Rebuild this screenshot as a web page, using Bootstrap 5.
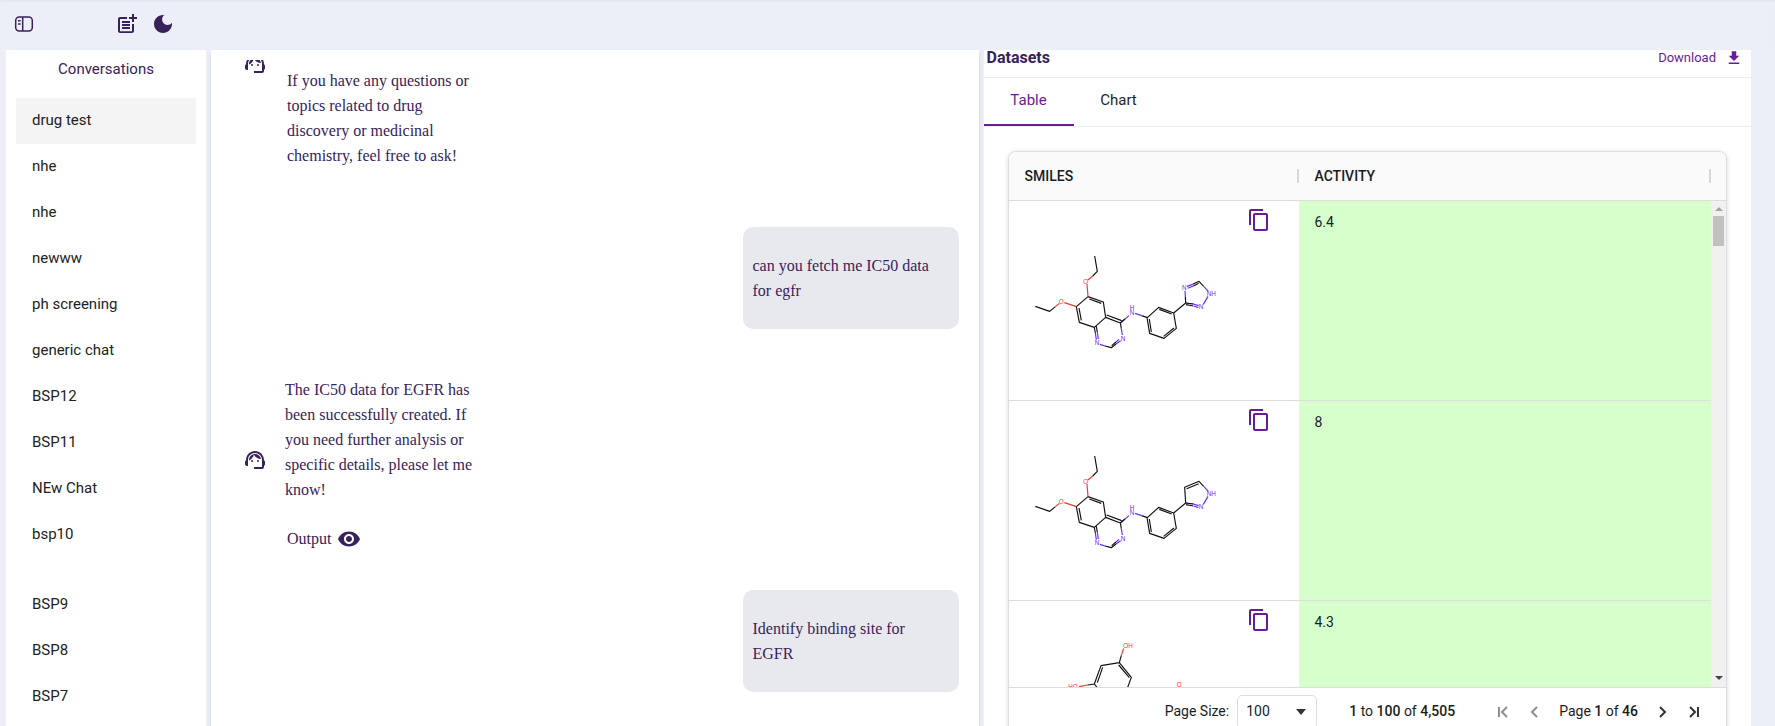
<!DOCTYPE html>
<html lang="en">
<head>
<meta charset="utf-8">
<meta name="viewport" content="width=device-width, initial-scale=1">
<title>Conversations</title>
<link href="https://cdn.jsdelivr.net/npm/bootstrap@5.3.0/dist/css/bootstrap.min.css" rel="stylesheet">
<style>
  :root { --ink: #38225b; --accent: #6a1b9a; --shell: #eceff8; --line: #dddddd; }
  body { background: var(--shell); font-family: Roboto, sans-serif; font-size: 15px; color: #212b36; }
  svg { display: block; }
  .icon { width: 24px; height: 24px; fill: currentColor; flex: none; }
  .bare { border: 0; background: none; padding: 0; color: var(--ink); }
  .topbar { height: 50px; padding: 0 12px 3px; box-shadow: inset 0 3px 3px -2px #dfe2ec; flex: none; }
  .tools { padding-left: 79px; }
  .workspace { padding: 0 24px 0 6px; gap: 5px; min-height: 0; }
  .sidebar { width: 200px; padding: 7px 10px; flex: none; }
  .sidebar h2 { font-size: 15px; font-weight: 400; line-height: 24px; color: var(--ink); margin: 0 0 17px; }
  .talks a { display: block; padding: 0 16px 2px; line-height: 44px; color: #222; text-decoration: none; }
  .talks a.current { background: #f4f4f4; }
  .talks .older { margin-top: 24px; }
  .pane { flex: 1 1 0; min-width: 0; overflow: hidden; }
  .chat { padding-top: 10px; box-shadow: 0 3px 4px #c9cbe2; }
  .feed { height: 100%; padding: 0 20px 0 32px; overflow: hidden; gap: 32px; font-family: "Liberation Serif", serif; font-size: 16px; line-height: 25px; color: var(--ink); }
  .agent { gap: 18px; flex: none; padding: 16px 0 7px; }
  .agent > .icon { margin-bottom: 8px; }
  .agent.first { min-height: 135px; gap: 20px; padding: 8px 0 0; }
  .agent.first > .icon { margin-top: -16px; }
  .agent .words { width: 190px; }
  .mine { align-self: flex-end; width: 216px; padding: 26px 10px; border-radius: 10px; background: #e8e9ef; flex: none; }
  .output { margin-top: 24px; padding-left: 2px; gap: 6px; }
  .datahead { height: 28px; padding: 0 8px 12px 3px; border-bottom: 1px solid #ededed; color: var(--ink); }
  .datahead h1 { font-size: 16px; line-height: 15px; font-weight: 700; margin: 0; }
  .datahead button { color: var(--accent); gap: 9px; font-size: 13px; line-height: 15px; height: 15px; }
  .datahead .icon { width: 18px; height: 18px; }
  .views { height: 49px; border-bottom: 1px solid #ededed; }
  .views button { width: 90px; height: 48px; color: #212529; padding-bottom: 2px; border-bottom: 2px solid transparent; }
  .views button.active { color: var(--accent); border-bottom-color: var(--accent); }
  .datawrap { padding: 24px; }
  .datagrid { height: calc(100vh - 141px); border: 1px solid var(--line); border-radius: 8px; box-shadow: 0 1px 4px 1px rgba(0,0,0,.1); overflow: hidden; font-size: 14px; color: #181d1f; }
  .viewport { flex: 1; min-height: 0; overflow: hidden; border-bottom: 1px solid var(--line); position: relative; }
  .viewport table { width: 100%; table-layout: fixed; border-collapse: separate; border-spacing: 0; }
  .viewport col.structure { width: 290px; }
  .viewport th { height: 49px; padding: 0 0 0 16px; font-weight: 500; background: #fafafa; border-bottom: 1px solid var(--line); }
  .viewport th div { display: flex; align-items: center; justify-content: space-between; height: 14px; line-height: 14px; border-right: 2px solid #d6d7d7; }
  .viewport th:last-child { padding-right: 15px; }
  .viewport td { height: 200px; padding: 0; vertical-align: top; border-bottom: 1px solid var(--line); }
  .viewport td.level { background: #d6ffcc; padding: 11px 16px; line-height: 21px; }
  .smiles { position: relative; height: 199px; }
  .smiles svg.mol { width: 240px; height: 198px; }
  .smiles button { position: absolute; right: 28px; top: 7px; color: var(--accent); }
  .mol { fill: none; stroke: #111; stroke-width: 3.5; stroke-linejoin: round; }
  .mol text { font: 19px "Liberation Sans", sans-serif; stroke: none; text-anchor: middle; }
  .mol .o { stroke: #ff3030; } .mol .n { stroke: #6a2cff; }
  .mol text.o { fill: #ff3030; stroke: none; } .mol text.n { fill: #6a2cff; stroke: none; }
  .track { position: absolute; right: 0; top: 49px; bottom: 0; width: 15px; background: #f1f1f1; padding: 5px 2px; }
  .thumb { height: 30px; background: #c1c1c1; }
  .pager { height: 47px; flex: none; padding-right: 24px; }
  .pager b { font-weight: 500; }
  .pager select { width: 80px; height: 34px; margin: 0 32px 0 8px; padding: 0 8px; border: 1px solid var(--line); border-radius: 5px; appearance: none; color: #181d1f; font-size: 14px; background: #fff; }
  .sizebox { position: relative; }
  .sizebox svg { position: absolute; right: 43px; top: 14px; pointer-events: none; }
  .pager .step { width: 16px; height: 16px; fill: none; stroke: #333; stroke-width: 2; }
  .pager :disabled .step { stroke: #8c8e8f; }
</style>
</head>
<body>
<div class="d-flex flex-column vh-100 overflow-hidden">
  <header class="topbar d-flex align-items-center">
    <button class="bare" aria-label="Toggle sidebar"><svg class="icon" viewBox="0 0 24 24"><g fill="none" stroke="currentColor" stroke-width="1.5"><rect x="3.700" y="5" width="16.600" height="14" rx="3.500"/><path d="M10.700 5v14M6 8.800h2.600M6 12h2.600"/></g></svg></button>
    <div class="tools d-flex gap-2">
      <button class="bare me-1" aria-label="New conversation"><svg class="icon" viewBox="0 0 24 24"><path d="M17 19.22H5V7h7V5H5c-1.1 0-2 .9-2 2v12c0 1.1.9 2 2 2h12c1.1 0 2-.9 2-2v-7h-2v7.22z"/><path d="M19 2h-2v3h-3v2h3v3h2V7h3V5h-3V2zM7 9h8v2H7zm0 3v2h8v-2H7zm0 3h8v2H7z"/></svg></button>
      <button class="bare" aria-label="Dark mode"><svg class="icon" viewBox="0 0 24 24"><path d="M12 3c-4.97 0-9 4.03-9 9s4.03 9 9 9 9-4.03 9-9c0-.46-.04-.92-.1-1.36-.98 1.37-2.58 2.26-4.4 2.26-2.98 0-5.4-2.42-5.4-5.4 0-1.81.89-3.42 2.26-4.4-.44-.06-.9-.1-1.36-.1z"/></svg></button>
    </div>
  </header>

  <main class="workspace d-flex flex-fill">
    <nav class="sidebar bg-white overflow-hidden">
      <h2 class="text-center">Conversations</h2>
      <ul class="talks list-unstyled mb-0">
        <li><a class="current" href="#">drug test</a></li>
        <li><a href="#">nhe</a></li>
        <li><a href="#">nhe</a></li>
        <li><a href="#">newww</a></li>
        <li><a href="#">ph screening</a></li>
        <li><a href="#">generic chat</a></li>
        <li><a href="#">BSP12</a></li>
        <li><a href="#">BSP11</a></li>
        <li><a href="#">NEw Chat</a></li>
        <li><a href="#">bsp10</a></li>
        <li class="older"><a href="#">BSP9</a></li>
        <li><a href="#">BSP8</a></li>
        <li><a href="#">BSP7</a></li>
      </ul>
    </nav>

    <section class="chat pane bg-white">
      <div class="feed d-flex flex-column">
        <div class="agent first d-flex align-items-start">
          <svg class="icon" viewBox="0 0 24 24"><use href="#agent"/></svg>
          <div class="words">If you have any questions or topics related to drug discovery or medicinal chemistry, feel free to ask!</div>
        </div>
        <div class="mine">can you fetch me IC50 data for egfr</div>
        <div class="agent d-flex align-items-center">
          <svg class="icon" viewBox="0 0 24 24"><g id="agent"><path d="M21 12.22C21 6.73 16.74 3 12 3c-4.69 0-9 3.65-9 9.28-.6.34-1 .98-1 1.72v2c0 1.1.9 2 2 2h1v-6.1c0-3.87 3.13-7 7-7s7 3.13 7 7V19h-8v2h8c1.1 0 2-.9 2-2v-1.22c.59-.31 1-.92 1-1.64v-2.3c0-.7-.41-1.31-1-1.62z"/><circle cx="9" cy="13" r="1"/><circle cx="15" cy="13" r="1"/><path d="M18 11.03C17.52 8.18 15.04 6 12.05 6c-3.03 0-6.29 2.51-6.03 6.45 2.47-1.01 4.33-3.21 4.86-5.89 1.31 2.63 4 4.44 7.12 4.47z"/></g></svg>
          <div class="words">
            The IC50 data for EGFR has been successfully created. If you need further analysis or specific details, please let me know!
            <div class="output d-flex align-items-center">Output
              <button class="bare" aria-label="Show output"><svg class="icon" viewBox="0 0 24 24"><path d="M12 4.500C7 4.500 2.730 7.610 1 12c1.730 4.390 6 7.500 11 7.500s9.270-3.110 11-7.500c-1.730-4.390-6-7.500-11-7.500zM12 17c-2.760 0-5-2.240-5-5s2.240-5 5-5 5 2.240 5 5-2.240 5-5 5zm0-8c-1.660 0-3 1.340-3 3s1.340 3 3 3 3-1.340 3-3-1.340-3-3-3z"/></svg></button>
            </div>
          </div>
        </div>
        <div class="mine">Identify binding site for EGFR</div>
      </div>
    </section>

    <section class="pane bg-white">
      <div class="datahead d-flex justify-content-between align-items-center">
        <h1>Datasets</h1>
        <button class="bare d-flex align-items-center">Download <svg class="icon" viewBox="0 0 24 24"><path d="M19 9h-4V3H9v6H5l7 7 7-7zM5 18v2h14v-2H5z"/></svg></button>
      </div>
      <div class="views d-flex" role="tablist">
        <button class="bare active" role="tab" aria-selected="true">Table</button>
        <button class="bare" role="tab" aria-selected="false">Chart</button>
      </div>
      <div class="datawrap">
        <div class="datagrid d-flex flex-column bg-white">
          <div class="viewport">
            <table>
              <colgroup><col class="structure"><col></colgroup>
              <thead><tr><th><div>SMILES</div></th><th><div>ACTIVITY</div></th></tr></thead>
              <tbody>
                <tr>
                  <td><div class="smiles">
                    <svg class="mol" viewBox="27 3 720 594">
                      <g id="core">
                        <path d="M284 168l8 46-14 14M106 319l43 15 17-14M229 320l35-30 46 16 7 46-34 30-45-15zM237 324l7 37M268 297l36 13M317 352l44 17 3 17M320 345l45 17M283 382l3 17M289 379l3 18M315 438l19 5 14-11M335 437l13-11M425 347l17 6 34-31 45 17 8 46-37 30-43-15-8-47M448 357l6 39M478 328l37 14M522 384l-31 25M521 339l36-30"/>
                        <path class="o" d="M278 228l-14 12M261 252l3 38M229 320l-36-12M166 320l12-10"/>
                        <path class="n" d="M364 386l3 19M286 399l3 20M292 397l3 20M300 433l15 5M348 432l14-10M348 426l9-8M361 369l26-22M405 340l20 7M580 312l16 5M581 318l14 5M610 313l14-24M557 309l23 3"/>
                        <path d="M557 309l23 3M558 314l22 4M361 369l14-12"/>
                        <text class="o" x="257" y="251">O</text><text class="o" x="184" y="312">O</text>
                        <text class="n" x="291" y="436">N</text><text class="n" x="369" y="422">N</text>
                        <text class="n" x="396" y="329">H</text><text class="n" x="396" y="345">N</text>
                        <text class="n" x="603" y="327">N</text><text class="n" x="634" y="287">NH</text>
                      </g>
                      <path d="M557 309l-1-20M578 253l19-9 14 15M580 258l16-8"/>
                      <path class="n" d="M556 289l-1-17M561 259l17-6M563 265l17-7M611 259l14 15"/>
                      <text class="n" x="553" y="269">N</text>
                    </svg>
                    <button class="bare" aria-label="Copy SMILES"><svg class="icon" viewBox="0 0 24 24"><path id="copy" d="M16 1H4c-1.100 0-2 .900-2 2v14h2V3h12V1zm3 4H8c-1.100 0-2 .900-2 2v14c0 1.100.900 2 2 2h11c1.100 0 2-.900 2-2V7c0-1.100-.900-2-2-2zm0 16H8V7h11v14z"/></svg></button>
                  </div></td>
                  <td class="level">6.4</td>
                </tr>
                <tr>
                  <td><div class="smiles">
                    <svg class="mol" viewBox="27 3 720 594"><use href="#core"/>
                      <path d="M557 309l-3-47 43-18 14 15M560 266l36-15"/><path class="n" d="M611 259l14 15"/>
                    </svg>
                    <button class="bare" aria-label="Copy SMILES"><svg class="icon" viewBox="0 0 24 24"><use href="#copy"/></svg></button>
                  </div></td>
                  <td class="level">8</td>
                </tr>
                <tr>
                  <td><div class="smiles">
                    <svg class="mol" viewBox="27 33 720 594">
                      <path d="M358 218l6-22M358 218l-55 9-20 55 36 44 55-9 20-55zM356 225l32 38M308 232l-16 46M283 282l-20 3"/>
                      <path class="o" d="M364 196l7-21M263 285l-26 5"/>
                      <text class="o" x="384" y="173">OH</text><text class="o" x="219" y="297">HO</text><text class="o" x="538" y="290">O</text>
                    </svg>
                    <button class="bare" aria-label="Copy SMILES"><svg class="icon" viewBox="0 0 24 24"><use href="#copy"/></svg></button>
                  </div></td>
                  <td class="level">4.3</td>
                </tr>
              </tbody>
            </table>
            <div class="track d-flex flex-column">
              <svg class="mx-auto mb-1" width="8" height="6" viewBox="0 0 8 6"><path d="M0 5l4-4 4 4z" fill="#a3a3a3"/></svg>
              <div class="thumb"></div>
              <svg class="mx-auto mt-auto" width="8" height="6" viewBox="0 0 8 6"><path d="M0 0l4 4 4-4z" fill="#444"/></svg>
            </div>
          </div>
          <div class="pager d-flex align-items-center justify-content-end">
            <label for="size">Page Size:</label>
            <div class="sizebox">
              <select id="size"><option>100</option></select>
              <svg width="10" height="6" viewBox="0 0 10 6"><path d="M0 0h10L5 6z" fill="#333"/></svg>
            </div>
            <span class="me-4"><b>1</b> to <b>100</b> of <b>4,505</b></span>
            <div class="d-flex align-items-center gap-3 ms-3">
              <button class="bare" disabled aria-label="First page"><svg class="step" viewBox="0 0 16 16"><path d="M4 3v10M12 3L7 8l5 5"/></svg></button>
              <button class="bare" disabled aria-label="Previous page"><svg class="step" viewBox="0 0 16 16"><path d="M10 3L5 8l5 5"/></svg></button>
              <span>Page <b>1</b> of <b>46</b></span>
              <button class="bare" aria-label="Next page"><svg class="step" viewBox="0 0 16 16"><path d="M6 3l5 5-5 5"/></svg></button>
              <button class="bare" aria-label="Last page"><svg class="step" viewBox="0 0 16 16"><path d="M4 3l5 5-5 5M12 3v10"/></svg></button>
            </div>
          </div>
        </div>
      </div>
    </section>
  </main>
</div>
<script src="https://cdn.jsdelivr.net/npm/bootstrap@5.3.0/dist/js/bootstrap.bundle.min.js"></script>
</body>
</html>
